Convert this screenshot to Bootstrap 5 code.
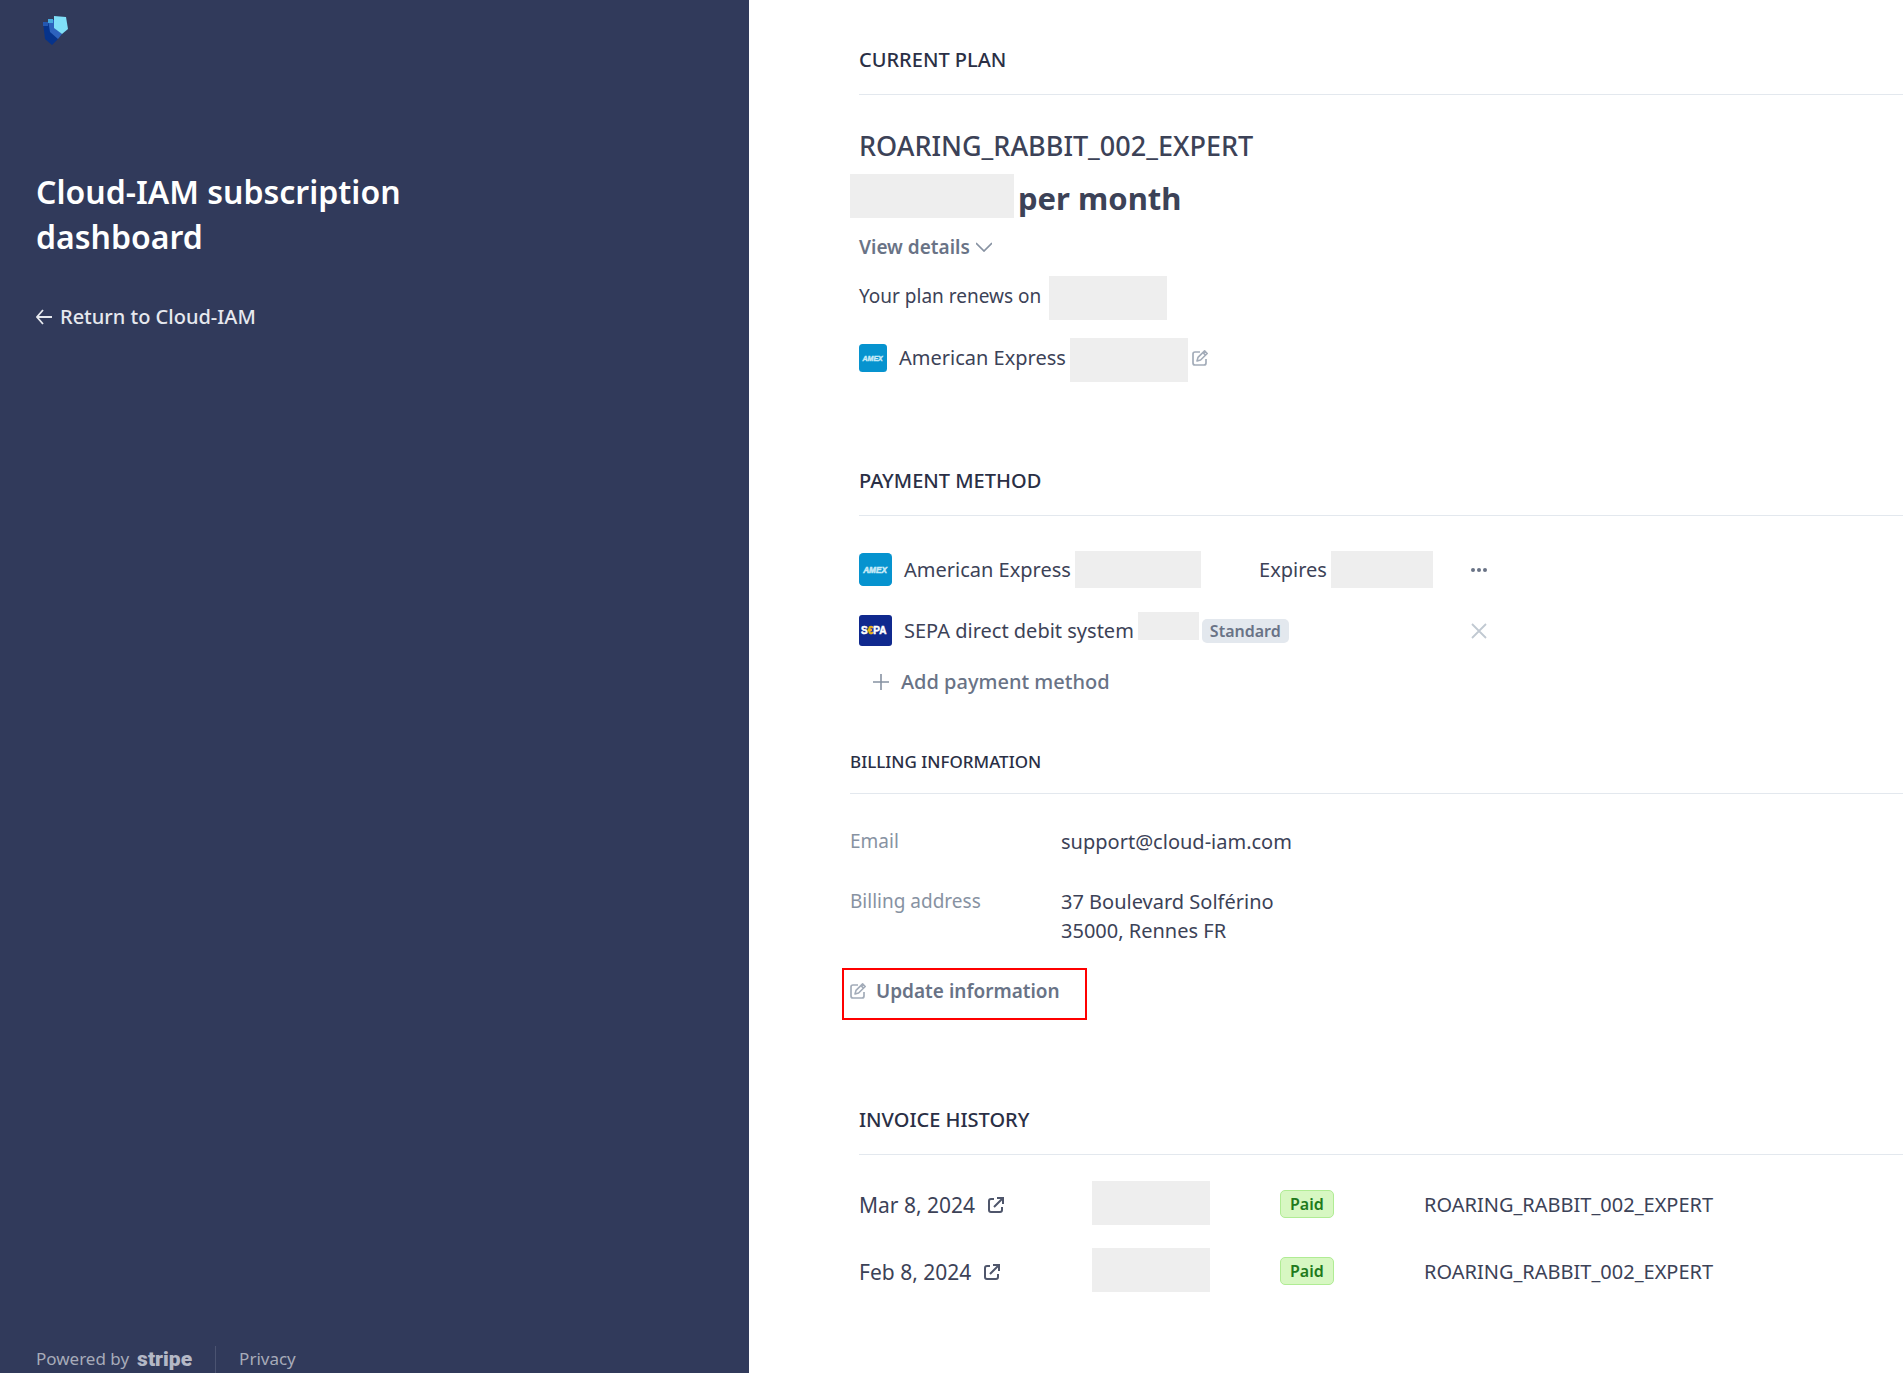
<!DOCTYPE html>
<html lang="en">
<head>
<meta charset="utf-8">
<meta name="viewport" content="width=device-width, initial-scale=1">
<title>Cloud-IAM subscription dashboard</title>
<link href="https://cdn.jsdelivr.net/npm/bootstrap@5.3.0/dist/css/bootstrap.min.css" rel="stylesheet">
<style>
body{font-family:"Noto Sans","Open Sans",sans-serif;font-size:20px;line-height:28px;color:#3c4257;background:#fff}
svg{display:block;flex:none}
.side-panel{width:39.36%;background:#313a5b;color:#fff;padding:16px 36px 0}
.side-title{font-size:32px;line-height:45px;font-weight:600;max-width:400px;margin-top:123px}
.side-return{margin-top:44px;color:#e6e8ee;font-weight:500}
.side-foot{color:#a7abb9;font-size:17px;height:28px}
.side-foot a{color:inherit}
.stripe-name{font-family:Roboto,sans-serif;font-weight:900;font-size:21px;color:#b4b8c6}
.foot-rule{width:1px;height:27px;background:#4b5371;margin:0 23px}
.main-panel{padding:46px 0 0 101px;min-width:0}
.inset-section{padding-left:9px}
.section-title{font-size:20px;line-height:28px;font-weight:500;color:#2a2f45;border-bottom:1px solid #e3e8ee;padding-bottom:20px;margin:0}
.redacted{background:#eee;height:44px;width:118px;flex:none}
.plan-name{font-size:27px;line-height:40px;font-weight:500;margin:31px 0 8px}
.plan-price{font-size:31px;line-height:48px;height:44px;font-weight:700;margin-left:-9px;gap:4px}
.plan-price .redacted{width:164px}
.muted-action{color:#697386;font-size:19px;font-weight:600;background:none;border:0;padding:0;text-align:left}
.details-action{margin:15px 0;gap:6px}
.renew-text{font-size:19px}
.card-line{margin-top:18px}
.lift{padding-bottom:4px}
.edit-icon{color:#a3acb9}
.pay-row{height:37px}
.pay-row .redacted{height:37px;width:126px}
.pay-row .expiry-date{width:102px}
.pay-row .iban{width:61px;height:28px}
.pay-main{width:400px}
.pay-detail{width:212px}
.payment-section{margin-top:85px}
.payment-section .section-title{margin-bottom:35px}
.tag-standard{background:#e3e8ee;color:#697386;font-size:16px;line-height:24px;font-weight:600;border-radius:5px;padding:0 8px;margin-left:3px}
.add-action{margin:19px 0 0 14px;gap:12px;font-size:20px;font-weight:500}
.billing-section{margin-top:52px}
.billing-section .section-title{padding-bottom:17px;font-size:17px}
.bill-grid{display:grid;grid-template-columns:211px 1fr;row-gap:31px;line-height:29px;margin:33px 0 23px}
.bill-grid dt{font-size:19px;font-weight:400;color:#8792a2}
.bill-grid dd{margin:0}
.update-action{border:2px solid #f00;width:245px;height:52px;margin-left:-8px;padding:0 0 6px 6px;gap:10px}
.invoice-section{margin-top:86px}
.invoice-table{table-layout:fixed;width:100%;margin-top:26px}
.invoice-table td{padding:0 0 23px;height:67px;vertical-align:middle}
.invoice-table td.txt{padding:4px 0 23px}
.invoice-table a{color:inherit;font-size:21px;gap:12px}
.invoice-table svg{color:#4f566b}
.tag-paid{display:inline-block;background:#d7f7c2;border:1px solid #b0ec94;color:#217a1c;font-size:16px;line-height:26px;font-weight:600;border-radius:5px;padding:0 9px}
</style>
<script src="https://cdn.jsdelivr.net/npm/bootstrap@5.3.0/dist/js/bootstrap.bundle.min.js"></script>
</head>
<body>
<svg class="d-none">
  <symbol id="edit" viewBox="0 0 16 16"><path d="M8 2H3Q1 2 1 4v9q0 2 2 2h9q2 0 2-2V9" fill="none" stroke="currentColor" stroke-width="1.7"/><path d="M5 11l1-3.6L12.6.9l2.6 2.6L8.600 10zM11 2.600l2.500 2.500" fill="none" stroke="currentColor" stroke-width="1.600" stroke-linejoin="round"/></symbol>
  <symbol id="external" viewBox="0 0 18 18"><path d="M7 3H4Q2 3 2 5v9q0 2 2 2h9q2 0 2-2v-3M10 2h6v6M16 2L7 11" fill="none" stroke="currentColor" stroke-width="2"/></symbol>
  <symbol id="amex" viewBox="0 0 32 32"><rect width="32" height="32" rx="4" fill="#0693cf"/><text x="4" y="19" font-family="Liberation Sans, sans-serif" font-size="8" font-weight="700" font-style="italic" fill="#c8ebf8" stroke="#c8ebf8" stroke-width="0.500">AMEX</text></symbol>
</svg>
<div class="d-flex min-vh-100">
  <aside class="side-panel d-flex flex-column flex-shrink-0">
    <svg class="ms-1" width="30" height="30" viewBox="0 0 30 30" role="img" aria-label="Cloud-IAM"><path d="M3 6h6l2 10 7 7-6 6-7-6z" fill="#06338b"/><path d="M3 6h5v4H3z" fill="#2457b0"/><path d="M8 4h6l1 8 7 6-4 5-8-7z" fill="#2d62bd"/><path d="M8 3h5v4H8z" fill="#45a9df"/><path d="M14 0l12 1 2 12-6 5-8-6z" fill="#80dff8"/></svg>
    <h1 class="side-title mb-0">Cloud-IAM subscription dashboard</h1>
    <a href="#" class="side-return d-flex align-items-center text-decoration-none gap-2"><svg width="16" height="16" viewBox="0 0 16 16"><path d="M7 1L1 8l6 7M1 8h15" fill="none" stroke="currentColor" stroke-width="1.800"/></svg>Return to Cloud-IAM</a>
    <footer class="side-foot d-flex align-items-center mt-auto">
      <span class="me-2">Powered by</span><span class="stripe-name">stripe</span><span class="foot-rule"></span><a href="#" class="text-decoration-none">Privacy</a>
    </footer>
  </aside>
  <main class="main-panel flex-grow-1">
    <section class="inset-section">
      <h2 class="section-title">CURRENT PLAN</h2>
      <h3 class="plan-name">ROARING_RABBIT_002_EXPERT</h3>
      <div class="plan-price d-flex"><span class="redacted"></span>per month</div>
      <button type="button" class="muted-action details-action d-flex align-items-center">View details<svg width="16" height="10" viewBox="0 0 16 10"><path d="M0 1l8 8 8-8" fill="none" stroke="#8792a2" stroke-width="1.700"/></svg></button>
      <div class="d-flex align-items-center gap-2"><span class="renew-text lift">Your plan renews on</span><span class="redacted"></span></div>
      <div class="card-line d-flex align-items-center"><span class="lift me-2"><svg width="28" height="28"><use href="#amex"/></svg></span><span class="lift ms-1 me-1">American Express</span><span class="redacted"></span><button type="button" class="muted-action edit-icon lift ms-1" aria-label="Edit payment method"><svg width="16" height="16"><use href="#edit"/></svg></button></div>
    </section>
    <section class="inset-section payment-section">
      <h2 class="section-title">PAYMENT METHOD</h2>
      <div class="pay-row d-flex align-items-center">
        <div class="pay-main d-flex align-items-center"><svg width="33" height="33" class="me-2"><use href="#amex"/></svg><span class="ms-1 me-1">American Express</span><span class="redacted"></span></div>
        <div class="pay-detail d-flex align-items-center"><span class="me-1">Expires</span><span class="redacted expiry-date"></span></div>
        <button type="button" class="muted-action" aria-label="More"><svg width="16" height="4" viewBox="0 0 16 4"><g fill="#697386"><circle cx="2" cy="2" r="2"/><circle cx="8" cy="2" r="2"/><circle cx="14" cy="2" r="2"/></g></svg></button>
      </div>
      <div class="pay-row d-flex align-items-center mt-4">
        <div class="pay-main d-flex align-items-center h-100"><svg width="33" height="31" viewBox="0 0 33 31" class="me-2"><rect width="33" height="31" rx="3" fill="#10298e"/><text x="2" y="19" font-family="Liberation Sans, sans-serif" font-weight="700" font-size="10" fill="#fff" stroke="#fff" stroke-width="0.500">S<tspan fill="#f0b90b" stroke="#f0b90b">€</tspan>PA</text></svg><span class="ms-1 me-1 text-nowrap">SEPA direct debit system</span><span class="redacted iban align-self-start"></span><span class="tag-standard">Standard</span></div>
        <div class="pay-detail"></div>
        <button type="button" class="muted-action" aria-label="Remove"><svg width="16" height="16" viewBox="0 0 16 16"><path d="M1 1l14 14M15 1L1 15" stroke="#c1c9d2" stroke-width="1.800"/></svg></button>
      </div>
      <button type="button" class="muted-action add-action d-flex align-items-center"><svg width="16" height="16" viewBox="0 0 16 16"><path d="M8 0v16M0 8h16" stroke="#8792a2" stroke-width="1.600"/></svg>Add payment method</button>
    </section>
    <section class="billing-section">
      <h2 class="section-title">BILLING INFORMATION</h2>
      <dl class="bill-grid"><dt>Email</dt><dd>support@cloud-iam.com</dd><dt>Billing address</dt><dd>37 Boulevard Solférino<br>35000, Rennes FR</dd></dl>
      <button type="button" class="muted-action update-action d-flex align-items-center"><svg width="16" height="16" class="edit-icon"><use href="#edit"/></svg>Update information</button>
    </section>
    <section class="inset-section invoice-section">
      <h2 class="section-title">INVOICE HISTORY</h2>
      <table class="invoice-table"><colgroup><col style="width:233px"><col style="width:188px"><col style="width:144px"><col></colgroup>
      <tr><td class="txt"><a href="#" class="text-decoration-none d-flex align-items-center">Mar 8, 2024<svg width="18" height="18"><use href="#external"/></svg></a></td><td><div class="redacted"></div></td><td><span class="tag-paid">Paid</span></td><td class="txt">ROARING_RABBIT_002_EXPERT</td></tr>
      <tr><td class="txt"><a href="#" class="text-decoration-none d-flex align-items-center">Feb 8, 2024<svg width="18" height="18"><use href="#external"/></svg></a></td><td><div class="redacted"></div></td><td><span class="tag-paid">Paid</span></td><td class="txt">ROARING_RABBIT_002_EXPERT</td></tr>
      </table>
    </section>
  </main>
</div>
</body>
</html>
